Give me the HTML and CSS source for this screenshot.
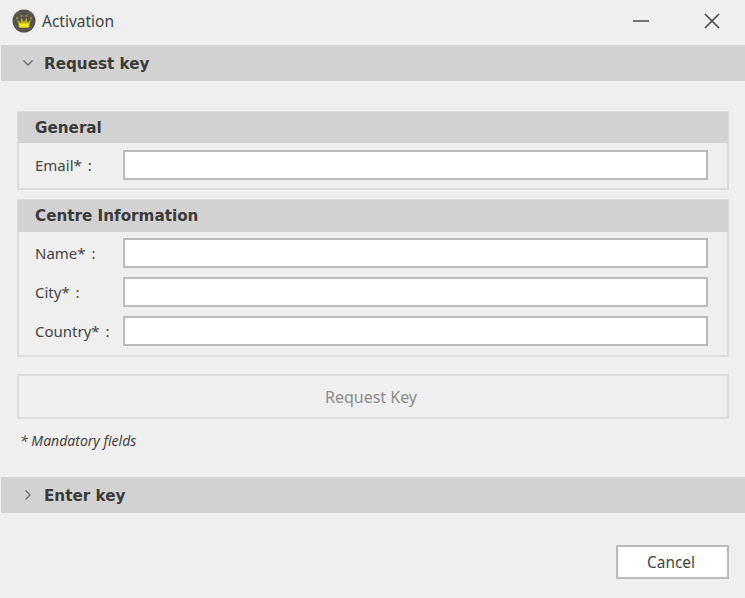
FILE: index.html
```html
<!DOCTYPE html>
<html lang="en">
<head>
    <meta charset="UTF-8">
    <title>Activation</title>
    <link rel="stylesheet" href="styles.css">
</head>
<body>
    <div class="window">
        <div class="titlebar">
            <svg class="app-icon" width="24" height="24" viewBox="0 0 24 24">
                <circle cx="12" cy="12" r="11.5" fill="#55534e"/>
                <path d="M5 10 L8.5 13.5 L9.5 8.5 L12 13 L14.5 8.5 L15.5 13.5 L19 10 L17 18.5 H7 Z" fill="#b5ad22"/>
                <path d="M7.2 14.5 H16.8 L16.5 18.5 H7.6 Z" fill="#f3e619"/>
                <circle cx="5" cy="9" r="1.2" fill="#8f8a3a"/>
                <circle cx="9.5" cy="7" r="1.2" fill="#8f8a3a"/>
                <circle cx="14.5" cy="7" r="1.2" fill="#8f8a3a"/>
                <circle cx="19" cy="9" r="1.2" fill="#8f8a3a"/>
            </svg>
            <span class="title">Activation</span>
            <button class="win-btn minimize">
                <svg width="16" height="4" viewBox="0 0 16 4"><path d="M0 2 H16" stroke="#4a4a4a" stroke-width="1.5"/></svg>
            </button>
            <button class="win-btn close">
                <svg width="16" height="16" viewBox="0 0 16 16"><path d="M1 1 L15 15 M15 1 L1 15" stroke="#4a4a4a" stroke-width="1.6"/></svg>
            </button>
        </div>

        <div class="section-header">
            <svg class="chevron" width="12" height="12" viewBox="0 0 12 12"><path d="M1.5 3.5 L6 8 L10.5 3.5" fill="none" stroke="#6a6a6a" stroke-width="1.3"/></svg>
            <span>Request key</span>
        </div>

        <div class="section-body">
            <div class="group">
                <div class="group-header">General</div>
                <div class="group-rows">
                    <div class="row">
                        <label>Email* :</label>
                        <input type="text" class="field">
                    </div>
                </div>
            </div>

            <div class="group group-centre">
                <div class="group-header">Centre Information</div>
                <div class="group-rows">
                    <div class="row">
                        <label>Name* :</label>
                        <input type="text" class="field">
                    </div>
                    <div class="row">
                        <label>City* :</label>
                        <input type="text" class="field">
                    </div>
                    <div class="row">
                        <label>Country* :</label>
                        <input type="text" class="field">
                    </div>
                </div>
            </div>

            <button class="request-btn" disabled>Request Key</button>
            <div class="note">* Mandatory fields</div>
        </div>

        <div class="section-header">
            <svg class="chevron" width="12" height="12" viewBox="0 0 12 12"><path d="M3.5 1.5 L8 6 L3.5 10.5" fill="none" stroke="#6a6a6a" stroke-width="1.3"/></svg>
            <span>Enter key</span>
        </div>

        <div class="footer">
            <button class="cancel-btn">Cancel</button>
        </div>
    </div>
</body>
</html>
```

FILE: styles.css
```css
html, body {
    margin: 0;
    padding: 0;
}
body {
    background-color: #efefef;
    color: #3c3c3c;
    font-family: 'Noto Sans', sans-serif;
    font-size: 15px;
}
.window {
    width: 745px;
    height: 598px;
    overflow: hidden;
}
.titlebar {
    height: 45px;
    display: flex;
    align-items: center;
    padding: 0 0 3px 12px;
    box-sizing: border-box;
}
.app-icon {
    margin-right: 6px;
}
.title {
    flex: 1;
    font-size: 15.5px;
    color: #444;
}
.win-btn {
    border: none;
    background: none;
    padding: 0;
    display: flex;
    align-items: center;
    justify-content: center;
}
.minimize {
    margin-right: 55px;
}
.close {
    margin-right: 25px;
}
.section-header {
    height: 36px;
    margin-left: 1px;
    background-color: #d2d2d2;
    display: flex;
    align-items: center;
    padding-left: 21px;
    font-family: 'DejaVu Sans', sans-serif;
    font-weight: bold;
    font-size: 15.2px;
    color: #3a3a3a;
}
.section-header span {
    padding-top: 2px;
}
.chevron {
    margin-right: 10px;
}
.section-body {
    padding: 30px 16px 0 17px;
    height: 396px;
    box-sizing: border-box;
}
.group {
    border: 2px solid #dcdcdc;
    margin-bottom: 9px;
}
.group-header {
    height: 31px;
    margin: -1px -1px 0;
    background-color: #d2d2d2;
    padding: 1px 0 0 17px;
    box-sizing: border-box;
    line-height: 30px;
    font-family: 'DejaVu Sans', sans-serif;
    font-weight: bold;
    font-size: 15.2px;
    color: #3a3a3a;
}
.group-centre .group-header {
    height: 32px;
    line-height: 31px;
}
.group-rows {
    display: flex;
    flex-direction: column;
    gap: 9px;
    padding: 7px 19px 8px 16px;
}
.group-centre .group-rows {
    padding-top: 6px;
    padding-bottom: 9px;
}
.row {
    display: flex;
    align-items: center;
}
.row label {
    width: 88px;
    flex-shrink: 0;
    color: #444;
    word-spacing: 2px;
}
.field {
    flex: 1;
    height: 30px;
    box-sizing: border-box;
    border: 2px solid #bbb;
    background-color: #fff;
    padding: 0 4px;
    outline: none;
    min-width: 0;
}
.request-btn {
    display: block;
    width: 100%;
    height: 45px;
    margin-top: 17px;
    padding: 0 4px 0 0;
    border: 2px solid #dcdcdc;
    background-color: #efefef;
    color: #8c8c8c;
    font-family: 'Noto Sans', sans-serif;
    font-size: 16px;
}
.note {
    margin: 12px 0 0 3px;
    font-style: italic;
    font-size: 14px;
    color: #444;
}
.footer {
    display: flex;
    justify-content: flex-end;
    padding: 32px 16px 0 0;
}
.cancel-btn {
    width: 113px;
    height: 34px;
    padding: 0 3px 0 0;
    border: 2px solid #bbb;
    background-color: #fff;
    color: #444;
    font-family: 'Noto Sans', sans-serif;
    font-size: 15.4px;
}
```
